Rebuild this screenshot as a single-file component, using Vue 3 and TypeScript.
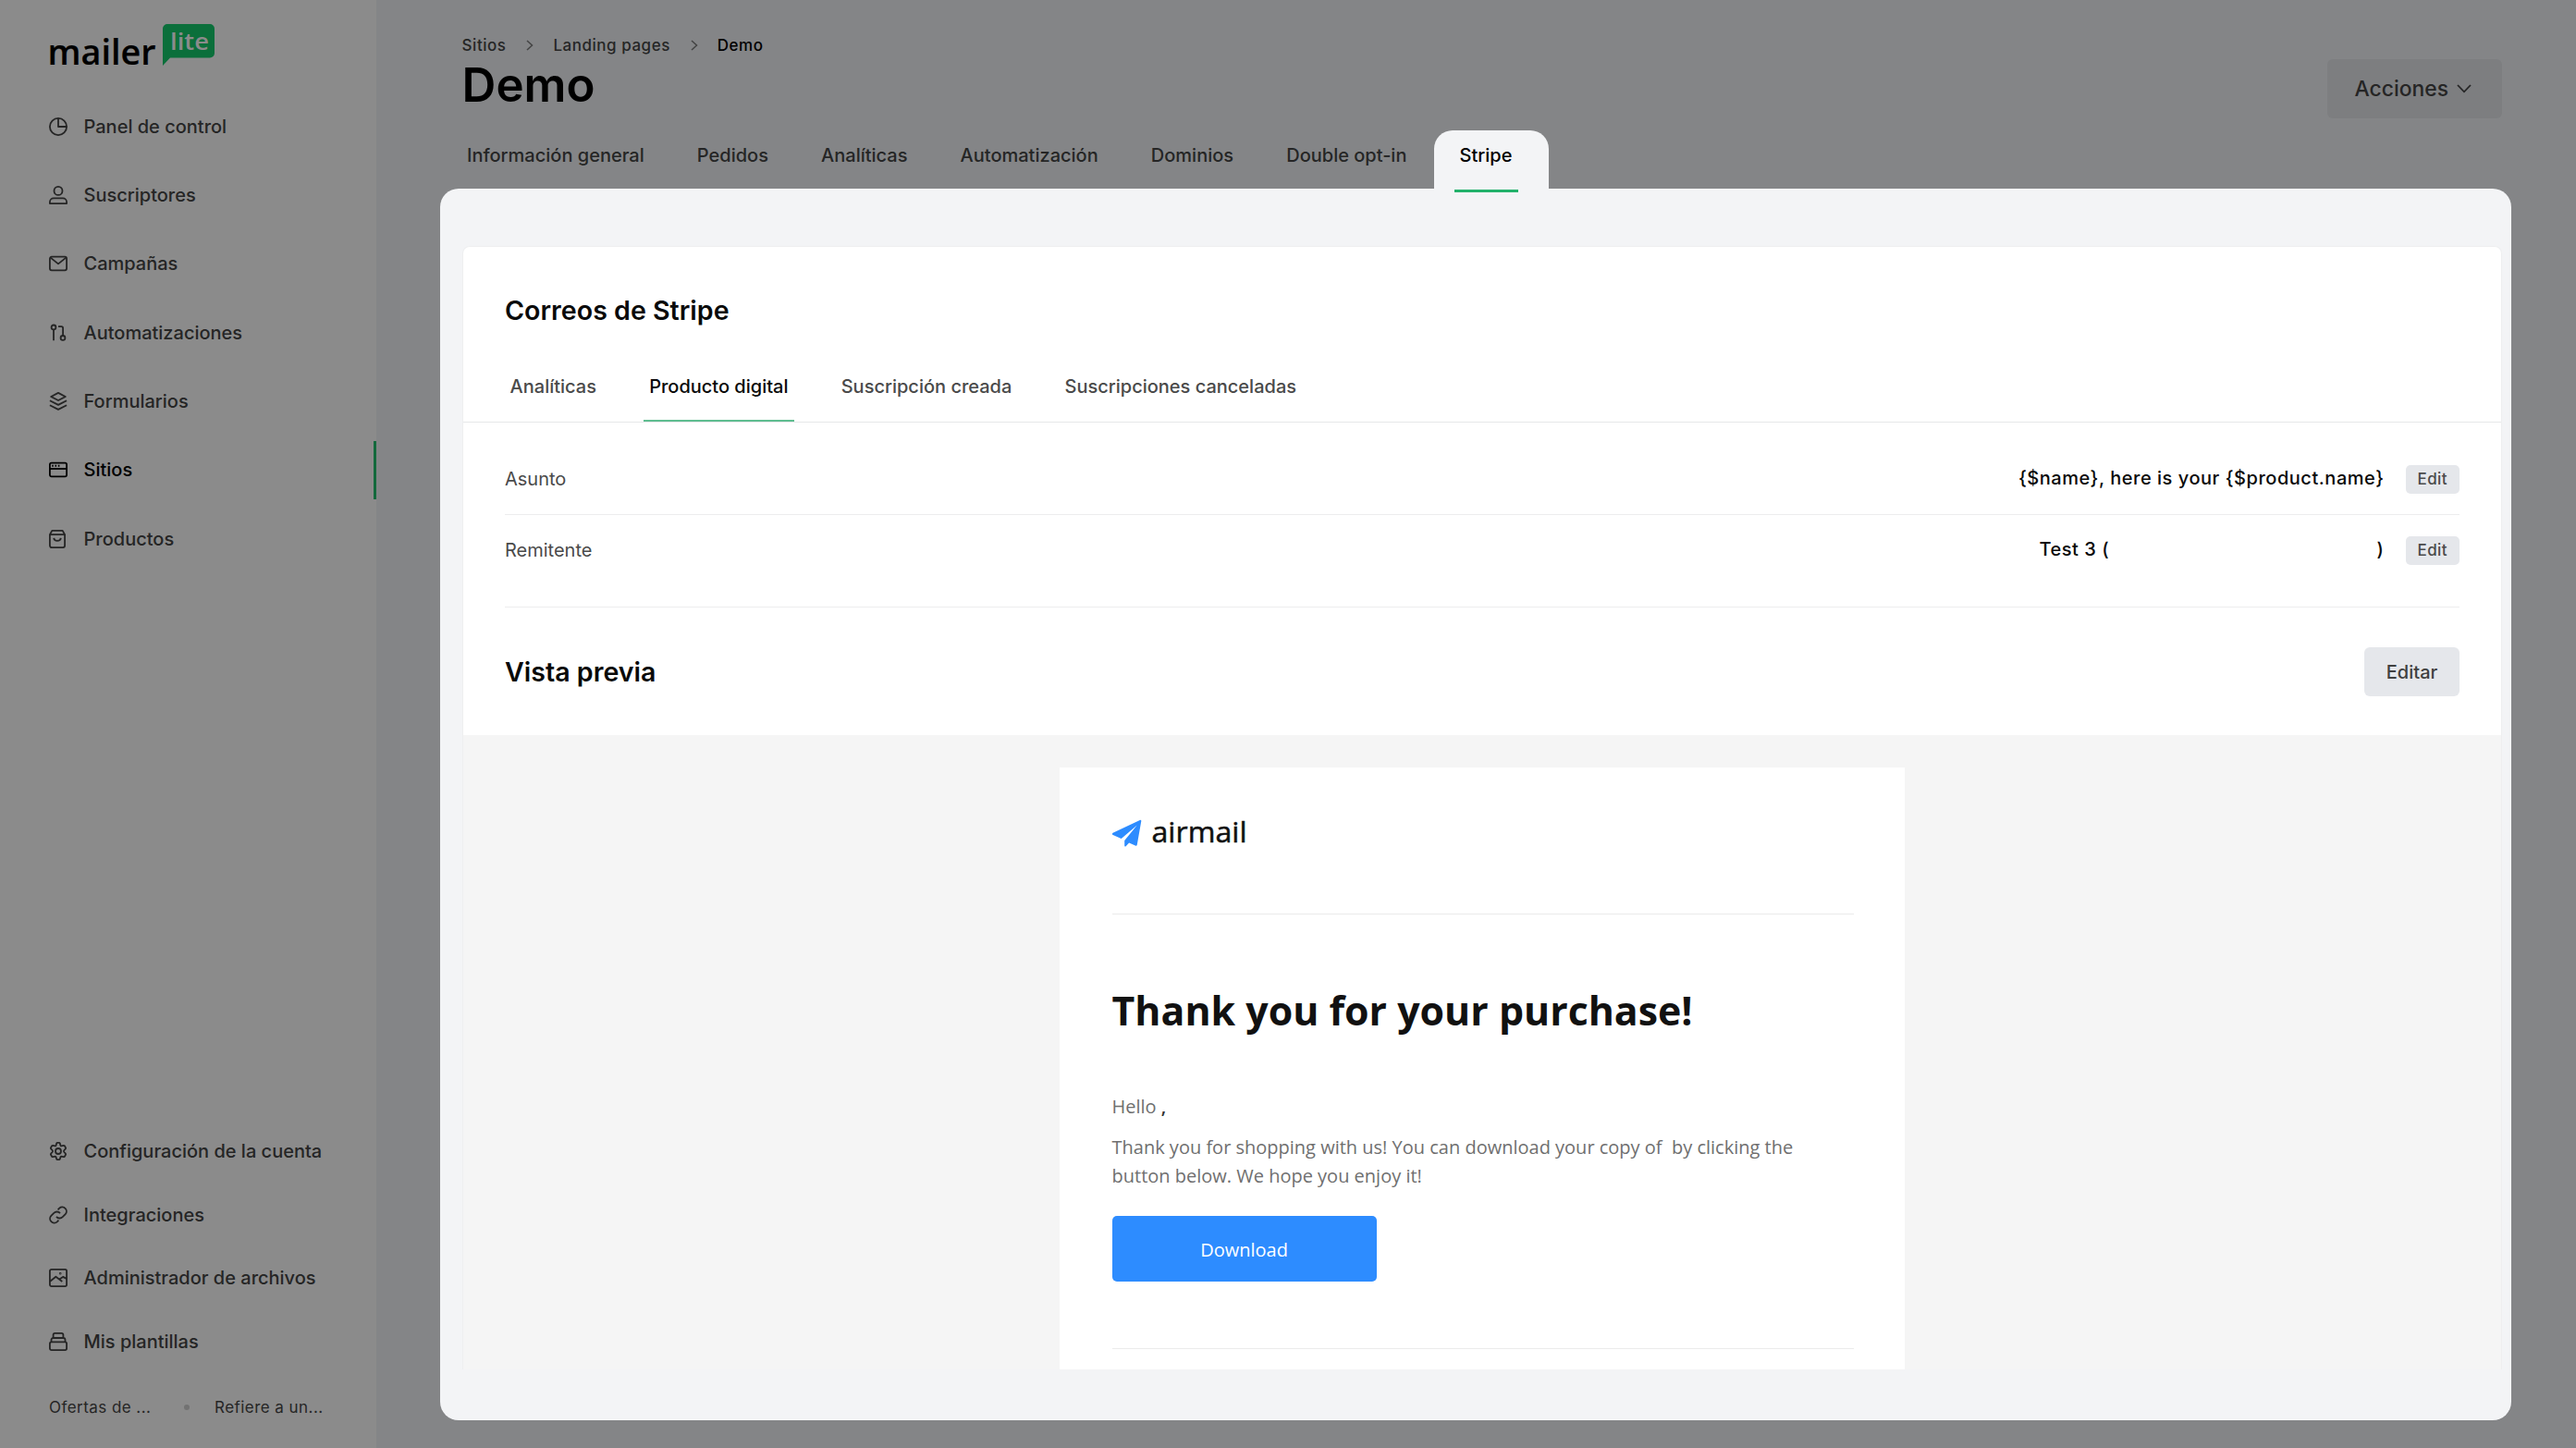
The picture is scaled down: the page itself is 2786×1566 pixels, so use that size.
<script setup lang="ts">
interface NavItem {
  label: string
  icon: string
  active?: boolean
}

const mainNav: NavItem[] = [
  { label: 'Panel de control', icon: 'chart' },
  { label: 'Suscriptores', icon: 'user' },
  { label: 'Campañas', icon: 'mail' },
  { label: 'Automatizaciones', icon: 'flow' },
  { label: 'Formularios', icon: 'layers' },
  { label: 'Sitios', icon: 'site', active: true },
  { label: 'Productos', icon: 'bag' },
]

const bottomNav: NavItem[] = [
  { label: 'Configuración de la cuenta', icon: 'gear' },
  { label: 'Integraciones', icon: 'link' },
  { label: 'Administrador de archivos', icon: 'image' },
  { label: 'Mis plantillas', icon: 'stack' },
]

const icons: Record<string, string> = {
  chart: '<circle cx="10" cy="10" r="9.1"/><path d="M10 .9V10h9.1"/>',
  user: '<circle cx="10" cy="5.4" r="4.5"/><path d="M.9 19.1v-1.6a4.2 4.2 0 0 1 4.2-4.2h9.8a4.2 4.2 0 0 1 4.2 4.2v1.6z"/>',
  mail: '<rect x=".9" y="2.7" width="18.2" height="14.6" rx="2"/><path d="M1.6 3.6 10 10.4l8.4-6.8"/>',
  flow: '<circle cx="5" cy="3.9" r="2.4"/><path d="M5 6.3v12"/><circle cx="15" cy="15.4" r="2.4"/><path d="M10 3.2h3.4a1.7 1.7 0 0 1 1.7 1.7V13"/>',
  layers: '<path d="M10 .9 2.2 5 10 9l7.8-4z"/><path d="m.9 9.2 9.1 4.7 9.1-4.7M.9 14.2 10 18.9l9.1-4.7"/>',
  site: '<rect x=".9" y="2.7" width="18.2" height="14.6" rx="1.8"/><path d="M.9 9h18.2"/><path d="M4 4.7v2M7.3 4.7v2M10.6 4.7v2" stroke-width="1.6"/>',
  bag: '<path d="M.9 5.2 3.3.9h11.4l2.4 4.3v11.9a2 2 0 0 1-2 2H2.9a2 2 0 0 1-2-2z"/><path d="M.9 5.2h16.2M5.2 8.8c.5 4 7.1 4 7.6 0"/>',
  gear: '<circle cx="10" cy="10" r="3"/><path d="M8.2 1.600Q8.400.9 9.100.9h1.800q.7 0 .9.700l.6 2q.2.600.8.700l2.600-.5q.7-.1 1.100.5l1.100 1.900q.4.700-.1 1.200l-1.500 1.600q-.4.500-.4 1t.4 1l1.500 1.600q.5.500.1 1.200l-1.100 1.900q-.4.600-1.100.5l-2.600-.5q-.6.100-.8.700l-.6 2q-.2.700-.9.700H9.100q-.7 0-.9-.7l-.6-2q-.2-.6-.8-.7l-2.600.5q-.7.100-1.100-.5L2 13.800q-.4-.7.100-1.200L3.600 11q.4-.5.400-1t-.4-1L2.100 7.400Q1.600 6.900 2 6.200l1.100-1.900q.4-.6 1.100-.5l2.600.5q.6-.1.800-.7z"/>',
  link: '<path d="M8 11.900a4.600 4.600 0 0 0 6.700.3l3-3a4.600 4.600 0 0 0-6.500-6.500L9.600 4.300"/><path d="M12 8.100a4.600 4.600 0 0 0-6.700-.3l-3 3a4.600 4.600 0 0 0 6.500 6.500l1.600-1.600"/>',
  image: '<rect x=".9" y=".9" width="18.200" height="18.200" rx="1.800"/><path d="m1.200 13.800 6.200-5 6.900 5.200M11.200 11.500l3.900-2.600 3.800 2"/><circle cx="12.200" cy="5.300" r=".4"/>',
  stack: '<rect x=".9" y="10.300" width="18.200" height="8.800" rx="1.800"/><path d="M2.500 10.300V8a2 2 0 0 1 2-2h11a2 2 0 0 1 2 2v2.300M4.600 6V2.700A1.800 1.800 0 0 1 6.400.9h7.200a1.800 1.800 0 0 1 1.800 1.800V6"/>',
}

const pageTabs = ['Información general', 'Pedidos', 'Analíticas', 'Automatización', 'Dominios', 'Double opt-in']
const mailTabs = ['Analíticas', 'Producto digital', 'Suscripción creada', 'Suscripciones canceladas']
</script>

<template>
  <div class="app">
    <aside class="sidebar">
      <svg class="logo" width="182" height="48" viewBox="0 0 182 48">
        <text class="logo-main" x="-1.500" y="44" textLength="117" lengthAdjust="spacingAndGlyphs">mailer</text>
        <path class="bubble" d="M128 0h46a5 5 0 0 1 5 5v26.500a5 5 0 0 1-5 5h-43L123 45V5a5 5 0 0 1 5-5z" />
        <text class="logo-lite" x="131" y="28.300" textLength="42" lengthAdjust="spacingAndGlyphs">lite</text>
      </svg>
      <nav class="nav">
        <a v-for="item in mainNav" :key="item.label" class="nav-item" :class="{ active: item.active }">
          <svg class="icon" viewBox="0 0 20 20" v-html="icons[item.icon]"></svg>
          <span>{{ item.label }}</span>
        </a>
      </nav>
      <nav class="nav nav-bottom">
        <a v-for="item in bottomNav" :key="item.label" class="nav-item">
          <svg class="icon" viewBox="0 0 20 20" v-html="icons[item.icon]"></svg>
          <span>{{ item.label }}</span>
        </a>
      </nav>
      <div class="offers">
        <span class="offer">Ofertas de ...</span>
        <i class="dot"></i>
        <span class="offer">Refiere a un...</span>
      </div>
    </aside>

    <main class="main">
      <header class="header">
        <div class="heading">
          <div class="crumbs">
            <span>Sitios</span>
            <svg class="sep" viewBox="0 0 8 12"><path d="m1 1 5.500 5L1 11" /></svg>
            <span>Landing pages</span>
            <svg class="sep" viewBox="0 0 8 12"><path d="m1 1 5.500 5L1 11" /></svg>
            <span class="current">Demo</span>
          </div>
          <h1>Demo</h1>
        </div>
        <button class="actions">
          <span>Acciones</span>
          <svg viewBox="0 0 16 10"><path d="m1 1 7 7.300L15 1" /></svg>
        </button>
      </header>

      <nav class="tabs">
        <a v-for="tab in pageTabs" :key="tab">{{ tab }}</a>
        <a class="selected">Stripe</a>
      </nav>

      <section class="panel">
        <div class="card">
          <h2 class="card-title">Correos de Stripe</h2>
          <nav class="mail-tabs">
            <a v-for="(tab, i) in mailTabs" :key="tab" :class="{ on: i === 1 }">{{ tab }}</a>
          </nav>
          <div class="rows">
            <div class="row">
              <span class="label">Asunto</span>
              <span class="value">{$name}, here is your {$product.name}</span>
              <button class="edit">Edit</button>
            </div>
            <div class="row last">
              <span class="label">Remitente</span>
              <span class="value sender"><span>Test 3 (</span><span>)</span></span>
              <button class="edit">Edit</button>
            </div>
          </div>
          <div class="preview-head">
            <h2>Vista previa</h2>
            <button class="editar">Editar</button>
          </div>
          <div class="canvas">
            <article class="email">
              <svg class="airmail" width="160" height="32" viewBox="0 0 160 32">
                <path class="plane" d="M30.300.9a1 1 0 0 1 1.500 1.100l-4.500 25.500a1.400 1.400 0 0 1-1.900 1L18.600 25.500l-3.500 3.700a.8.8 0 0 1-1.400-.6v-5.500L27.200 6.500 10.200 21 1.200 17a1.300 1.300 0 0 1-.1-2.300z" transform="translate(-.5 0)" />
                <text class="airmail-text" x="42.500" y="24.700" textLength="103" lengthAdjust="spacingAndGlyphs">airmail</text>
              </svg>
              <hr class="rule top-rule" />
              <h3>Thank you for your purchase!</h3>
              <p class="hello">Hello <b>,</b></p>
              <p class="body">Thank you for shopping with us! You can download your copy of&nbsp; by clicking the<br />button below. We hope you enjoy it!</p>
              <a class="download">Download</a>
              <hr class="rule end-rule" />
            </article>
          </div>
        </div>
      </section>
    </main>
  </div>
</template>

<style>
body {
  margin: 0;
  background: #848587;
}
</style>

<style scoped>
.app {
  display: flex;
  width: 2786px;
  height: 1566px;
  overflow: hidden;
  background: #848587;
  font-family: Inter, "Liberation Sans", sans-serif;
  font-size: 20px;
  font-weight: 500;
  color: #252525;
}
h1, h2, h3, p, hr { margin: 0; }
button { border: 0; padding: 0; font: inherit; letter-spacing: inherit; color: inherit; }

.sidebar {
  display: flex;
  flex-direction: column;
  box-sizing: border-box;
  width: 407px;
  height: 1566px;
  padding-top: 26px;
  background: #8b8b8b;
  flex: none;
}
.logo { display: block; margin-left: 53px; flex: none; overflow: visible; }
.logo-main {
  font: 600 38px "Open Sans", sans-serif;
  fill: #000;
  stroke: #000;
  stroke-width: 0.2;
  stroke-linejoin: round;
}
.logo-lite {
  font: 600 25px "Open Sans", sans-serif;
  fill: #8b8b8b;
}
.bubble { fill: #0b6f3b; }

.nav { display: flex; flex-direction: column; gap: 11.3px; margin-top: 31.3px; }
.nav-item {
  display: flex;
  align-items: center;
  height: 63px;
  padding-left: 53px;
  gap: 17.5px;
}
.nav-item.active { color: #000; box-shadow: inset -3px 0 #13693c; }
.icon {
  width: 20px;
  height: 20px;
  fill: none;
  stroke: currentColor;
  stroke-width: 1.8;
  stroke-linejoin: round;
}
.nav-bottom { margin-top: auto; gap: 5.5px; }
.offers {
  display: flex;
  align-items: center;
  height: 24px;
  margin: 28px 0 32px;
  padding-left: 53px;
  font-size: 17px;
  font-weight: 400;
  letter-spacing: 0.45px;
  flex: none;
}
.offer { width: 110px; white-space: nowrap; }
.dot {
  width: 6px;
  height: 6px;
  margin: 0 27px 0 36px;
  border-radius: 50%;
  background: #727272;
}

.main { display: flex; flex-direction: column; flex: 1; min-width: 0; }
.header { display: flex; justify-content: space-between; height: 141px; padding: 0 80px 0 92.6px; box-sizing: border-box; }
.heading { padding-top: 38px; }
.crumbs { display: flex; align-items: center; height: 22px; font-size: 17px; letter-spacing: 0.52px; }
.crumbs .current { color: #000; }
.sep { width: 8px; height: 12px; margin: 0 21px 0 22px; fill: none; stroke: #444; stroke-width: 1.5; }
h1 { height: 63px; line-height: 63px; font-size: 51px; font-weight: 600; color: #000; }
.actions {
  display: flex;
  align-items: center;
  width: 189px;
  height: 64px;
  margin-top: 64px;
  padding-left: 29.5px;
  box-sizing: border-box;
  border-radius: 6px;
  background: #7d7e80;
  font-size: 22.86px;
  gap: 9px;
}
.actions svg { width: 16px; height: 10px; fill: none; stroke: #252525; stroke-width: 1.8; }

.tabs { display: flex; height: 63px; padding-left: 98px; line-height: 54px; flex: none; }
.tabs a { margin-right: 57.15px; white-space: nowrap; }
.tabs .selected {
  position: relative;
  box-sizing: border-box;
  width: 124px;
  margin: 0 0 0 -28px;
  padding-left: 28px;
  border-radius: 20px 20px 0 0;
  background: #f3f4f6;
  color: #000;
}
.tabs .selected::after {
  content: "";
  position: absolute;
  left: 22px;
  bottom: -4px;
  width: 69px;
  height: 3px;
  background: #22b16b;
}

.panel {
  width: 2240px;
  height: 1332px;
  margin-left: 69px;
  padding: 62px 0 0 24px;
  box-sizing: border-box;
  border-radius: 20px;
  background: #f3f4f6;
  flex: none;
}
.card {
  display: flex;
  flex-direction: column;
  box-sizing: border-box;
  width: 2206px;
  height: 1215px;
  border: 1px solid #eeeff0;
  border-bottom: 0;
  border-radius: 8px 8px 0 0;
  background: #fff;
  overflow: hidden;
}
.card-title { height: 40px; padding: 49px 0 0 45px; }
h2 { font-size: 28.6px; line-height: 40px; font-weight: 600; color: #0a0a0a; }
.mail-tabs {
  display: flex;
  box-sizing: border-box;
  height: 75px;
  margin-top: 26px;
  padding-left: 44.6px;
  border-bottom: 1px solid #e6e7e9;
  line-height: 73px;
  color: #4a4a4a;
}
.mail-tabs a { height: 74px; margin-right: 45.2px; padding: 0 6px; white-space: nowrap; }
.mail-tabs .on { color: #0a0a0a; box-shadow: inset 0 -2px #5fbd90; }

.rows { margin: 0 45px; padding-top: 24px; }
.row { display: flex; align-items: flex-start; box-sizing: border-box; height: 76px; padding-top: 22px; border-bottom: 1px solid #ededee; }
.row.last { height: 100px; padding-top: 23px; }
.label { flex: 1; height: 30px; line-height: 31px; font-weight: 400; color: #4a4a4a; }
.value { height: 30px; line-height: 29px; margin-right: 23px; letter-spacing: 0.53px; color: #0a0a0a; }
.sender { display: flex; justify-content: space-between; width: 373px; }
.edit {
  width: 58.500px;
  height: 30.500px;
  border-radius: 5px;
  background: #e5e7eb;
  font-size: 17px;
  line-height: 30.500px;
  letter-spacing: 0.4px;
  color: #4a4a4a;
}

.preview-head {
  display: flex;
  justify-content: space-between;
  align-items: center;
  box-sizing: border-box;
  height: 138px;
  padding: 1px 45px 0;
  flex: none;
}
.editar {
  width: 103px;
  height: 53px;
  border-radius: 6px;
  background: #e5e7eb;
  color: #404040;
}
.canvas { display: flex; justify-content: center; flex: 1; min-height: 0; padding-top: 34.5px; background: #f5f5f5; }
.email {
  box-sizing: border-box;
  width: 914px;
  height: 651.5px;
  padding: 56.5px 55px 0 56.5px;
  background: #fff;
  font-family: "Open Sans", sans-serif;
  font-weight: 400;
  color: #6f6f6f;
}
.airmail { display: block; overflow: visible; }
.plane { fill: #2d8cff; }
.airmail-text {
  font: 500 31px "Open Sans", sans-serif;
  fill: #111;
  stroke: #111;
  stroke-width: 0.5;
}
.rule { height: 1px; border: 0; background: #ebebeb; }
.top-rule { margin-top: 70px; }
h3 { margin-top: 72px; font-size: 42.86px; line-height: 64px; font-weight: 700; color: #111; white-space: nowrap; }
.hello { margin-top: 57px; line-height: 30px; }
.hello b { font-weight: 600; color: #333; }
.body { margin-top: 14px; line-height: 30.5px; white-space: nowrap; }
.download {
  display: block;
  width: 286px;
  height: 71px;
  margin-top: 28px;
  border-radius: 5px;
  background: #2d8cff;
  color: #fff;
  line-height: 73px;
  text-align: center;
}
.end-rule { margin-top: 72px; }
</style>
